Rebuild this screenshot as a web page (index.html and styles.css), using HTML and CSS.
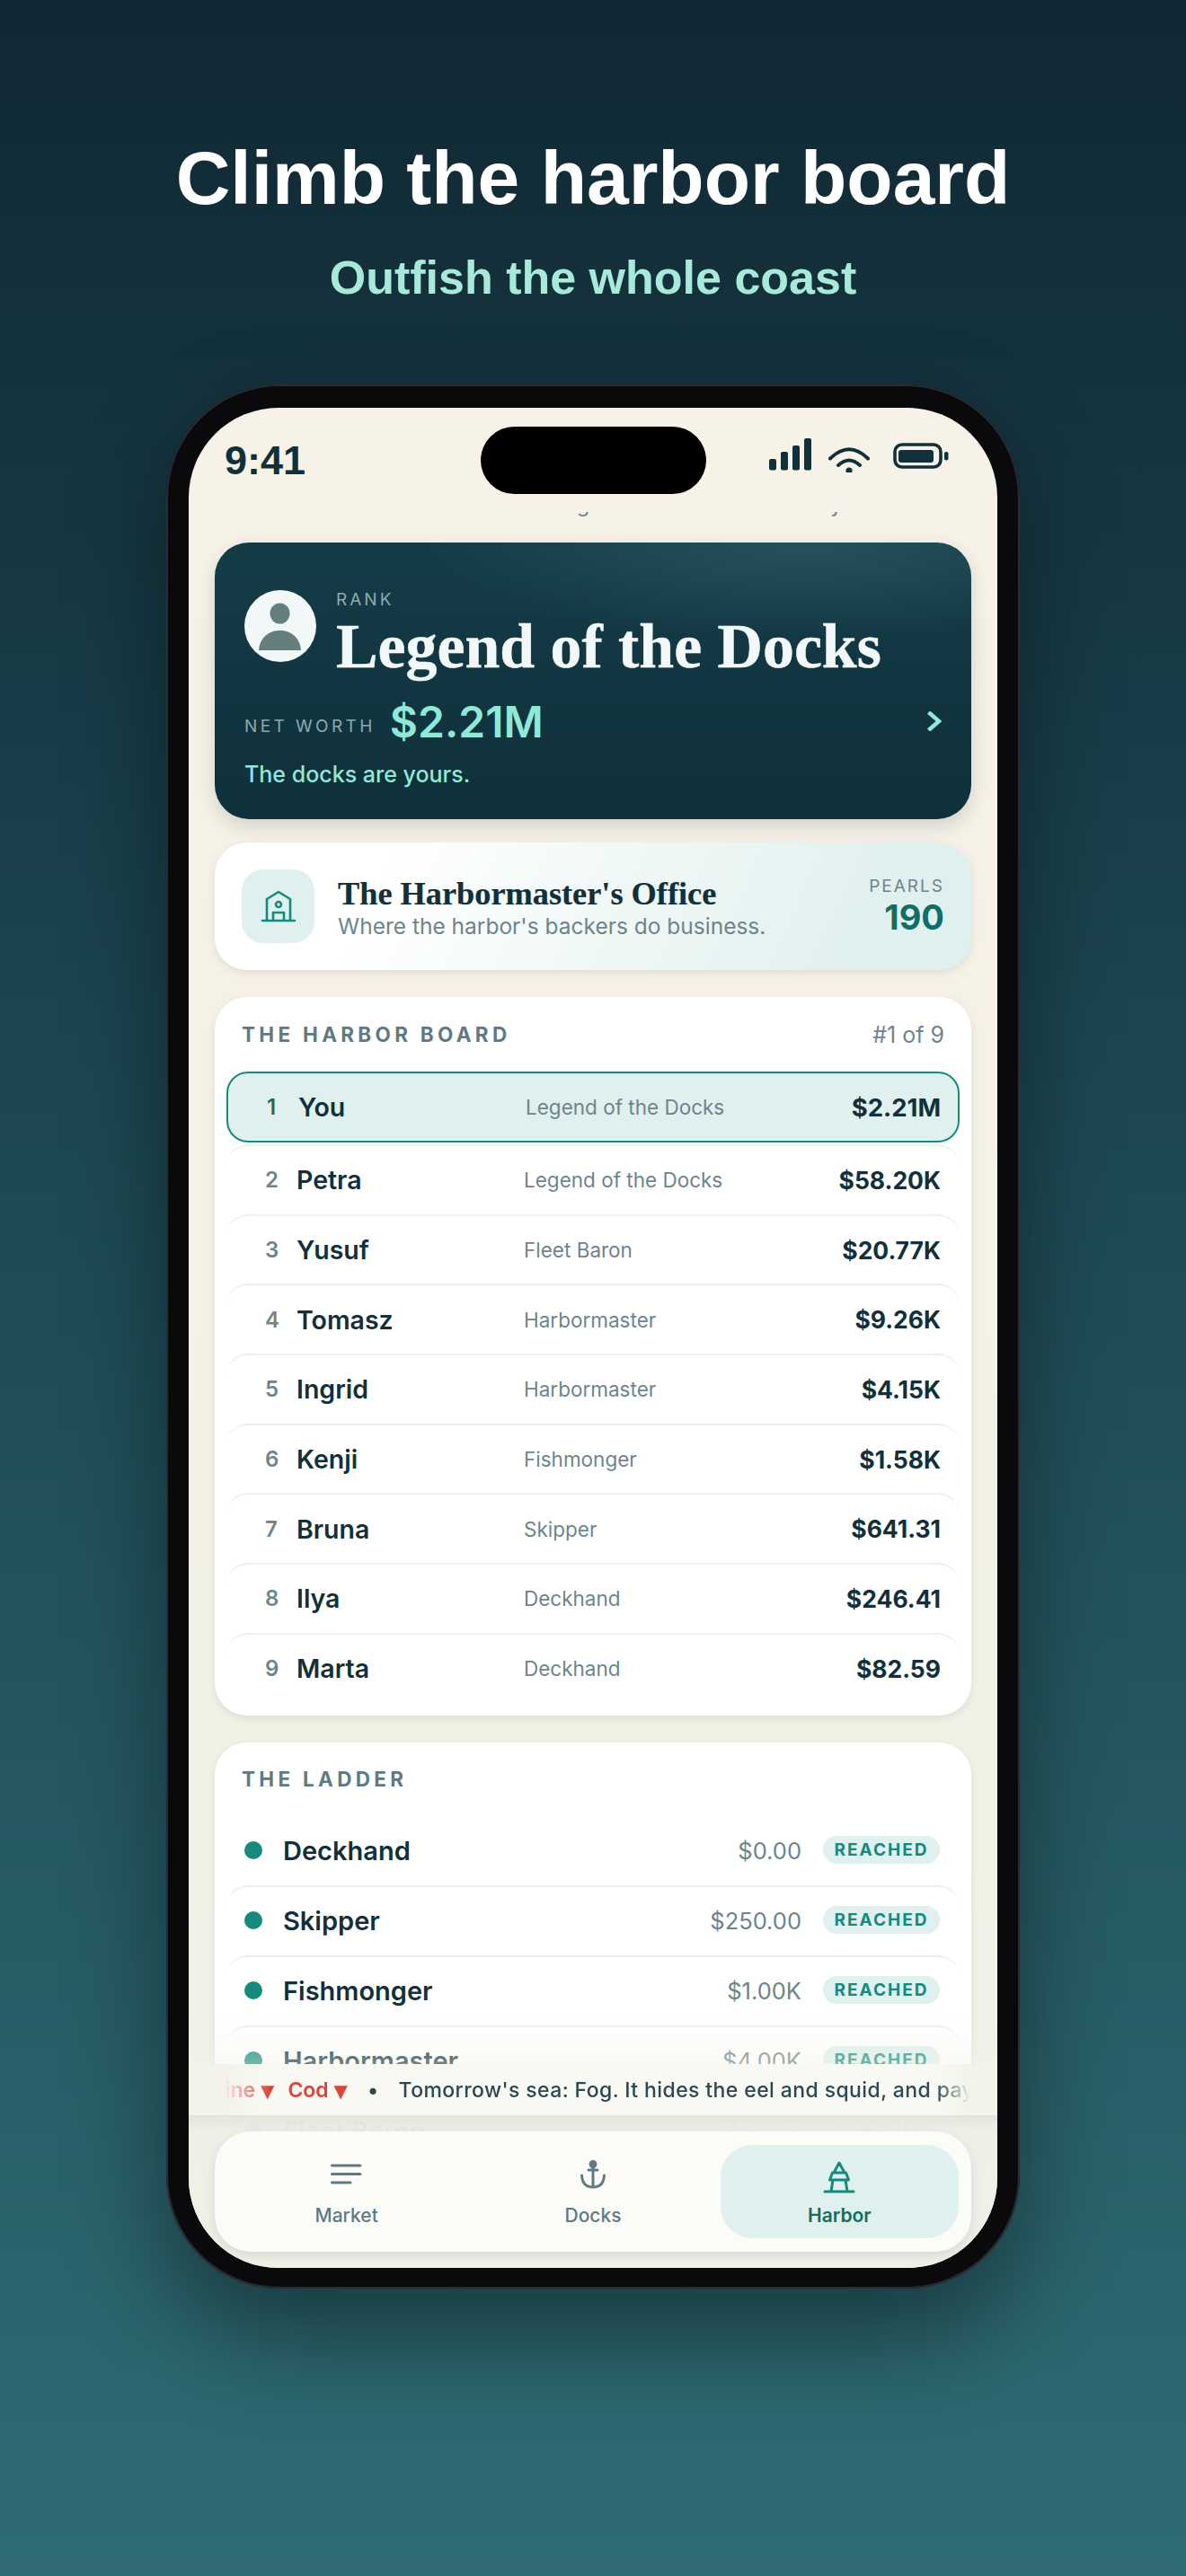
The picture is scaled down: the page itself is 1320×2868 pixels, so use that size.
FILE: index.html
```html
<!DOCTYPE html>
<html lang="en">
<head>
<meta charset="utf-8">
<title>Climb the harbor board</title>
<link rel="stylesheet" href="styles.css">
</head>
<body>
<header class="promo">
  <h1>Climb the harbor board</h1>
  <p>Outfish the whole coast</p>
</header>
<div class="phone">
  <div class="screen">
    <div class="status">
      <span class="time">9:41</span>
      <svg class="status-icons" width="200" height="40" viewBox="856 486 200 40">
        <g fill="#12303a">
          <rect x="856" y="511" width="8" height="12.5" rx="2"/>
          <rect x="869" y="503" width="8" height="20.5" rx="2"/>
          <rect x="882" y="496" width="8" height="27.5" rx="2"/>
          <rect x="895" y="488" width="8" height="35.5" rx="2"/>
          <circle cx="945" cy="524" r="3.6"/>
          <rect x="1000" y="501" width="39" height="14" rx="3"/>
          <rect x="1051" y="503" width="4.5" height="9.5" rx="2"/>
        </g>
        <g fill="none" stroke="#12303a" stroke-linecap="round">
          <path d="M924 510.500 Q945 490 966 510.500" stroke-width="4"/>
          <path d="M933 518 Q945 507 957 518" stroke-width="4"/>
          <rect x="996" y="495" width="51" height="25" rx="8" stroke-width="3.6"/>
        </g>
      </svg>
    </div>
    <div class="island"></div>
    <main class="scroll">
      <p class="peek">All fishers on this coast go in net worth order today</p>
      <section class="hero">
        <div class="hero-top">
          <svg class="avatar" width="80" height="80" viewBox="0 0 80 80">
            <circle cx="40" cy="40" r="40" fill="#f2f8f7"/>
            <ellipse cx="39.500" cy="26" rx="11" ry="11.500" fill="#647f7e"/>
            <path d="M16 67 C17 53 27 45 39.500 45 C52 45 62 53 63 67 Z" fill="#647f7e"/>
          </svg>
          <div>
            <div class="rank-label">RANK</div>
            <div class="rank-title">Legend of the Docks</div>
          </div>
        </div>
        <div class="worth">
          <span class="worth-label">NET WORTH</span>
          <span class="worth-value">$2.21M</span>
          <svg class="chev" width="18" height="22" viewBox="0 0 18 22"><path d="M2.500 1 L14 11 L2.500 21" fill="none" stroke="#8fe8d8" stroke-width="4.500"/></svg>
        </div>
        <div class="tagline">The docks are yours.</div>
      </section>
      <section class="office">
        <div class="office-tile">
          <svg width="40" height="38" viewBox="290 991 40 38" fill="none" stroke="#168a7d" stroke-width="2.600" stroke-linecap="round" stroke-linejoin="round">
            <path d="M297 1026 V1002 L310 994 L323 1002 V1026"/>
            <path d="M292 1026 H328"/>
            <circle cx="310" cy="1008" r="3"/>
            <path d="M304 1026 V1017 H316 V1026"/>
          </svg>
        </div>
        <div class="office-text">
          <div class="office-title">The Harbormaster's Office</div>
          <div class="office-sub">Where the harbor's backers do business.</div>
        </div>
        <div class="pearls">
          <div class="pearls-label">PEARLS</div>
          <div class="pearls-value">190</div>
        </div>
      </section>
      <section class="card board">
        <div class="card-head">
          <h2>THE HARBOR BOARD</h2>
          <span class="place">#1 of 9</span>
        </div>
        <div class="row me"><span class="pos">1</span><span class="who">You</span><span class="tier">Legend of the Docks</span><span class="amt">$2.21M</span></div>
        <div class="row"><span class="pos">2</span><span class="who">Petra</span><span class="tier">Legend of the Docks</span><span class="amt">$58.20K</span></div>
        <div class="row"><span class="pos">3</span><span class="who">Yusuf</span><span class="tier">Fleet Baron</span><span class="amt">$20.77K</span></div>
        <div class="row"><span class="pos">4</span><span class="who">Tomasz</span><span class="tier">Harbormaster</span><span class="amt">$9.26K</span></div>
        <div class="row"><span class="pos">5</span><span class="who">Ingrid</span><span class="tier">Harbormaster</span><span class="amt">$4.15K</span></div>
        <div class="row"><span class="pos">6</span><span class="who">Kenji</span><span class="tier">Fishmonger</span><span class="amt">$1.58K</span></div>
        <div class="row"><span class="pos">7</span><span class="who">Bruna</span><span class="tier">Skipper</span><span class="amt">$641.31</span></div>
        <div class="row"><span class="pos">8</span><span class="who">Ilya</span><span class="tier">Deckhand</span><span class="amt">$246.41</span></div>
        <div class="row"><span class="pos">9</span><span class="who">Marta</span><span class="tier">Deckhand</span><span class="amt">$82.59</span></div>
      </section>
      <section class="card ladder">
        <div class="card-head"><h2>THE LADDER</h2></div>
        <div class="step"><i class="dot"></i><span class="step-name">Deckhand</span><span class="step-price">$0.00</span><span class="pill">REACHED</span></div>
        <div class="step"><i class="dot"></i><span class="step-name">Skipper</span><span class="step-price">$250.00</span><span class="pill">REACHED</span></div>
        <div class="step"><i class="dot"></i><span class="step-name">Fishmonger</span><span class="step-price">$1.00K</span><span class="pill">REACHED</span></div>
        <div class="step"><i class="dot"></i><span class="step-name">Harbormaster</span><span class="step-price">$4.00K</span><span class="pill">REACHED</span></div>
        <div class="step"><i class="dot"></i><span class="step-name">Fleet Baron</span><span class="step-price">$15.00K</span><span class="pill">REACHED</span></div>
      </section>
    </main>
    <div class="fade"></div>
    <div class="dock"></div>
    <div class="ticker"><div class="ticker-run"><span class="down">Brine <small>▼</small></span><span class="down">Cod <small>▼</small></span><span class="sep">•</span><span>Tomorrow's sea: Fog. It hides the eel and squid, and pays well for it.</span></div></div>
    <nav class="tabs">
      <div class="tab">
        <svg width="40" height="40" viewBox="0 0 40 40" fill="none" stroke="#5f7a82" stroke-width="3" stroke-linecap="round"><path d="M3.500 6H35M3.500 15.500H35M3.500 25H24"/></svg>
        <span>Market</span>
      </div>
      <div class="tab">
        <svg width="40" height="40" viewBox="0 0 40 40" fill="none" stroke="#5f7a82" stroke-width="3" stroke-linecap="round"><circle cx="20" cy="4.500" r="3" fill="#5f7a82"/><path d="M20 7V30M15 11H25M7.500 17C8 26 13 30 20 30C27 30 32 26 32.500 17"/></svg>
        <span>Docks</span>
      </div>
      <div class="tab active">
        <svg width="40" height="40" viewBox="0 0 40 40" fill="none" stroke="#168a7d" stroke-width="3" stroke-linecap="round" stroke-linejoin="round"><path d="M4 35H36M9.500 22H30.500L27.500 14H12.500ZM14 14L20 3L26 14M13 22L11 35M27 22L29 35"/></svg>
        <span>Harbor</span>
      </div>
    </nav>
  </div>
</div>
</body>
</html>
```
FILE: styles.css
```css
* { box-sizing: border-box; }
html, body { margin: 0; padding: 0; }
body {
  width: 1320px;
  height: 2868px;
  overflow: hidden;
  background: linear-gradient(180deg, #102833 0%, #1b4550 40%, #2f6b73 100%);
  font-family: Inter, "Liberation Sans", sans-serif;
  color: #12303a;
}
.promo { height: 428px; padding-top: 147px; text-align: center; }
.promo h1 {
  margin: 0;
  font: 700 84px/102px "Liberation Sans", sans-serif;
  color: #fff;
}
.promo p {
  margin: 27px 0 0;
  font: 700 52px/66px "Liberation Sans", sans-serif;
  color: #a8e9da;
}
.phone {
  width: 950px;
  height: 2120px;
  margin-left: 185px;
  padding: 26px 25px 23px;
  border-radius: 126px;
  background: #0a0a0d;
  box-shadow: inset 0 0 0 2px #2a2c33, 0 50px 110px rgba(0, 0, 0, .42);
}
.screen {
  position: relative;
  width: 900px;
  height: 2071px;
  overflow: hidden;
  border-radius: 100px;
  background: linear-gradient(180deg, #f7f2e8 0%, #f6f1e6 30%, #eff1e7 100%);
  display: flex;
  flex-direction: column;
}
.status {
  flex: none;
  height: 116px;
  padding: 32px 0 0 40px;
  display: flex;
  justify-content: space-between;
  align-items: flex-start;
}
.time { font: 700 45px/54px "Liberation Sans", sans-serif; color: #12303a; }
.status-icons { margin: 0 54px 0 0; }
.island {
  position: absolute;
  left: 325px;
  top: 21px;
  width: 251px;
  height: 75px;
  border-radius: 38px;
  background: #000;
}
.scroll {
  flex: 1;
  min-height: 0;
  overflow: hidden;
  padding: 0 29px;
}
.peek {
  margin: -23px 0 27px;
  height: 30px;
  font-size: 23px;
  line-height: 30px;
  text-align: center;
  color: #6d858b;
  white-space: nowrap;
}
.hero {
  height: 308px;
  margin-bottom: 26px;
  padding: 52px 33px 0;
  border-radius: 38px;
  background:
    radial-gradient(ellipse 420px 110px at 78% 0%, rgba(70, 120, 125, .36), rgba(70, 120, 125, 0) 100%),
    linear-gradient(180deg, #143c47 0%, #0f303b 100%);
  box-shadow: 0 8px 20px rgba(20, 50, 60, .16);
}
.hero-top { display: flex; gap: 22px; align-items: flex-start; }
.avatar { flex: none; margin-top: 1px; }
.rank-label { font-size: 19px; line-height: 24px; letter-spacing: 3px; color: #8fa9ab; }
.rank-title {
  margin-top: 5px;
  font: 700 69.800px/70px "Liberation Serif", serif;
  -webkit-text-stroke: .5px #f2f8f7;
  color: #f2f8f7;
  white-space: nowrap;
}
.worth { margin-top: 20px; height: 56px; display: flex; align-items: center; gap: 16px; }
.worth-label { margin-top: 10px; font-size: 19px; letter-spacing: 3.400px; color: #8fa9ab; }
.worth-value { font-size: 48px; font-weight: 600; color: #8fe8d8; }
.chev { margin-left: auto; margin-right: -1px; }
.tagline { margin-top: 15px; font-size: 25px; line-height: 32px; font-weight: 500; color: #8fe8d8; }
.office {
  height: 142px;
  margin-bottom: 30px;
  padding: 0 30px;
  display: flex;
  align-items: center;
  gap: 26px;
  border-radius: 36px;
  background: linear-gradient(115deg, #fff 22%, #dff0ee 88%);
  box-shadow: 0 3px 8px rgba(20, 50, 60, .1);
}
.office-tile {
  flex: none;
  width: 81px;
  height: 82px;
  border-radius: 24px;
  background: #dff0ee;
  display: flex;
  align-items: center;
  justify-content: center;
}
.office-text { flex: 1; padding-top: 3px; }
.office-title { font: 700 36.300px/40px "Liberation Serif", serif; -webkit-text-stroke: .2px #12303a; color: #12303a; }
.office-sub { font-size: 24.500px; line-height: 32px; color: #6d858b; }
.pearls { text-align: right; }
.pearls-label { font-size: 19px; line-height: 24px; letter-spacing: 2px; color: #6d858b; }
.pearls-value { font-size: 38px; line-height: 44px; font-weight: 700; color: #0f6e66; }
.card {
  margin-bottom: 30px;
  padding: 0 13px 14px;
  border-radius: 36px;
  background: #fff;
  box-shadow: 0 3px 8px rgba(20, 50, 60, .1);
}
.card-head {
  height: 83px;
  padding: 0 17px;
  display: flex;
  align-items: center;
  justify-content: space-between;
}
.ladder .card-head { height: 81px; }
.card h2 { margin: 0; font-size: 22.500px; font-weight: 700; letter-spacing: 4.300px; color: #5f7a82; }
.place { font-size: 25px; color: #6d858b; }
.row {
  height: 77.700px;
  padding: 0 21px 0 43px;
  display: flex;
  align-items: center;
  border-top: 2px solid #edf0ee;
  border-radius: 24px;
}
.row.me {
  height: 79px;
  margin-bottom: 2px;
  padding: 0 19px 0 43px;
  border: 2px solid #168a7d;
  background: #dff0ee;
}
.pos { width: 35px; font-size: 24px; font-weight: 600; color: #6d858b; }
.me .pos { color: #0f6e66; }
.who { width: 253px; font-size: 28.500px; font-weight: 600; color: #12303a; }
.tier { flex: 1; font-size: 22.500px; color: #6d858b; }
.amt { font-size: 26.500px; font-weight: 700; color: #12303a; }
.me .amt { font-size: 27.500px; }
.step {
  height: 78px;
  padding: 0 22px 0 20px;
  display: flex;
  align-items: center;
  border-top: 2px solid #edf0ee;
  border-radius: 24px;
}
.card-head + .step { border-top-color: transparent; }
.dot { width: 20px; height: 20px; margin-right: 23px; margin-top: -2px; border-radius: 50%; background: #168a7d; }
.step-name { flex: 1; font-size: 29px; font-weight: 600; color: #12303a; }
.step-price { margin-right: 24px; font-size: 25.500px; color: #6d858b; }
.pill {
  width: 130px;
  height: 31px;
  margin-top: -2px;
  border-radius: 16px;
  background: #dff0ee;
  color: #168a7d;
  font-size: 19px;
  font-weight: 700;
  line-height: 31px;
  letter-spacing: 2px;
  text-align: center;
}
.fade {
  position: absolute;
  left: 0;
  right: 0;
  top: 1790px;
  height: 111px;
  background: linear-gradient(180deg, rgba(243, 243, 234, 0) 0%, rgba(243, 243, 234, .42) 49%, rgba(243, 243, 234, .96) 49%, rgba(243, 243, 234, .96) 100%);
}
.dock {
  position: absolute;
  left: 0;
  right: 0;
  top: 1901px;
  bottom: 0;
  background: linear-gradient(180deg, rgba(225, 228, 220, .96) 0%, rgba(238, 240, 230, .98) 10%, #eff1e7 30%);
}
.ticker {
  position: absolute;
  left: 31px;
  top: 1844px;
  width: 839px;
  height: 57px;
  overflow: hidden;
  background: rgba(250, 250, 245, .8);
  border-radius: 10px;
  -webkit-mask-image: linear-gradient(90deg, transparent 8px, #000 60px, #000 800px, transparent 100%);
  mask-image: linear-gradient(90deg, transparent 8px, #000 60px, #000 800px, transparent 100%);
}
.ticker-run {
  margin-left: -15px;
  display: flex;
  align-items: center;
  gap: 15px;
  height: 57px;
  font-size: 23px;
  letter-spacing: .4px;
  font-weight: 500;
  color: #2c4852;
  white-space: nowrap;
}
.down { color: #d8453a; font-weight: 600; letter-spacing: 0; }
.down small { font-size: 20px; font-family: "DejaVu Sans", sans-serif; }
.sep { margin: 0 7px; }
.tabs {
  position: absolute;
  left: 29px;
  top: 1919px;
  width: 842px;
  height: 134px;
  padding: 15px 14px;
  display: flex;
  gap: 9px;
  border-radius: 40px;
  background: #fbfcf7;
  box-shadow: 0 4px 12px rgba(20, 50, 60, .12);
}
.tab {
  flex: 1;
  display: flex;
  flex-direction: column;
  align-items: center;
  padding-top: 17px;
  border-radius: 36px;
  font-size: 21px;
  font-weight: 500;
  line-height: 26px;
  color: #5f7a82;
}
.tab span { margin-top: 9px; }
.tab.active { background: #dff0ee; color: #0f6e66; font-weight: 600; }
```
